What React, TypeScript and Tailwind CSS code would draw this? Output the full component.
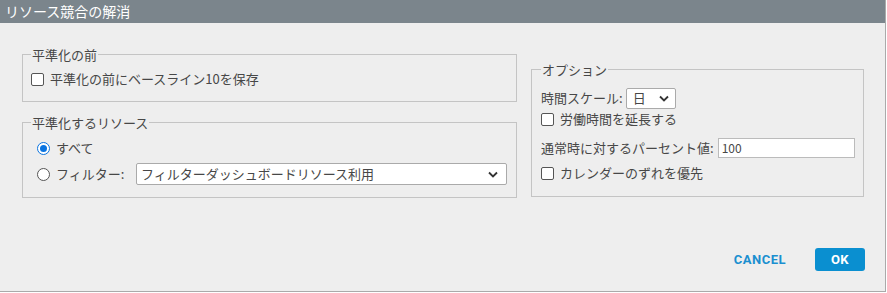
import React, { useState } from 'react';

const font = { fontFamily: '"Noto Sans CJK JP", "Noto Sans", sans-serif' };

function Check({ label }: { label: string }) {
  return (
    <label className="flex items-center gap-[6px] h-[20px]">
      <span className="w-[13px] h-[13px] rounded-[2px] border border-[#555] bg-white shrink-0" />
      <span className="whitespace-nowrap">{label}</span>
    </label>
  );
}

function Radio({ checked }: { checked?: boolean }) {
  return (
    <span
      className={`w-[13px] h-[13px] rounded-full border flex items-center justify-center bg-white shrink-0 ${checked ? 'border-[#0a74e0]' : 'border-[#555]'}`}
    >
      {checked && <span className="w-[7px] h-[7px] rounded-full bg-[#0a74e0]" />}
    </span>
  );
}

function Chevron() {
  return (
    <svg width="10" height="7" viewBox="0 0 10 7" className="shrink-0">
      <path d="M1 1.5 L5 5.5 L9 1.5" fill="none" stroke="#333" strokeWidth="1.8" />
    </svg>
  );
}

export default function App() {
  const [scope] = useState<'all' | 'filter'>('all');

  return (
    <div className="w-[887px] h-[293px] bg-white" style={font}>
      <div className="w-[886px] h-[292px] bg-[#eeeeee] border-r border-b border-[#aaaaaa] flex flex-col text-[13px] text-[#474747]">
        {/* header */}
        <div className="h-[23px] bg-[#7b858c] text-white text-[14px] leading-[23px] pl-[5px]">
          リソース競合の解消
        </div>

        <div className="flex gap-[14px] pl-[22px] pt-[23px]">
          {/* left column */}
          <div className="flex flex-col gap-[12px] w-[495px]">
            <fieldset className="border border-[#c4c4c4] px-[8px] pt-[6px] pb-[12px]">
              <legend className="px-[1px] leading-[17px]">平準化の前</legend>
              <Check label="平準化の前にベースライン10を保存" />
            </fieldset>

            <fieldset className="border border-[#c4c4c4] pl-[14px] pr-[9px] pt-[6px] pb-[10px]">
              <legend className="px-[1px] ml-[-6px] leading-[17px]">平準化するリソース</legend>
              <div className="flex items-center gap-[6px] h-[22px]">
                <Radio checked={scope === 'all'} />
                <span>すべて</span>
              </div>
              <div className="flex items-center gap-[6px] h-[26px] mt-[2px]">
                <Radio checked={scope === 'filter'} />
                <span className="w-[74px] whitespace-nowrap">フィルター:</span>
                <div className="flex-1 h-[22px] bg-white border border-[#aaa] rounded-[2px] flex items-center justify-between pl-[4px] pr-[8px]">
                  <span>フィルターダッシュボードリソース利用</span>
                  <Chevron />
                </div>
              </div>
            </fieldset>
          </div>

          {/* right column */}
          <div className="w-[333px] pt-[15px]">
            <fieldset className="border border-[#c4c4c4] pl-[9px] pr-[8px] pt-[9px] pb-[13px]">
              <legend className="px-[1px] leading-[17px]">オプション</legend>
              <div className="flex items-center gap-[3px] h-[22px]">
                <span className="whitespace-nowrap">時間スケール:</span>
                <div className="w-[50px] h-[21px] bg-white border border-[#aaa] rounded-[2px] flex items-center justify-between pl-[6px] pr-[6px]">
                  <span>日</span>
                  <Chevron />
                </div>
              </div>
              <Check label="労働時間を延長する" />
              <div className="flex items-center gap-[4px] h-[30px] mt-[4px]">
                <span className="whitespace-nowrap">通常時に対するパーセント値:</span>
                <div className="flex-1 min-w-0 h-[20px] bg-white border border-[#bbb] pl-[3px] leading-[18px] text-[12px]">
                  100
                </div>
              </div>
              <Check label="カレンダーのずれを優先" />
            </fieldset>
          </div>
        </div>

        {/* buttons */}
        <div className="mt-auto mb-[20px] flex items-center justify-end gap-[29px] pr-[20px]">
          <button className="text-[#1a8fd0] text-[13px] font-bold tracking-[0.5px]" style={{ fontFamily: 'Roboto, "Liberation Sans", sans-serif' }}>
            CANCEL
          </button>
          <button
            className="w-[50px] h-[23px] rounded-[3px] bg-[#0a8fd0] text-white text-[13px] font-bold tracking-[0.5px]"
            style={{ fontFamily: 'Roboto, "Liberation Sans", sans-serif' }}
          >
            OK
          </button>
        </div>
      </div>
    </div>
  );
}
